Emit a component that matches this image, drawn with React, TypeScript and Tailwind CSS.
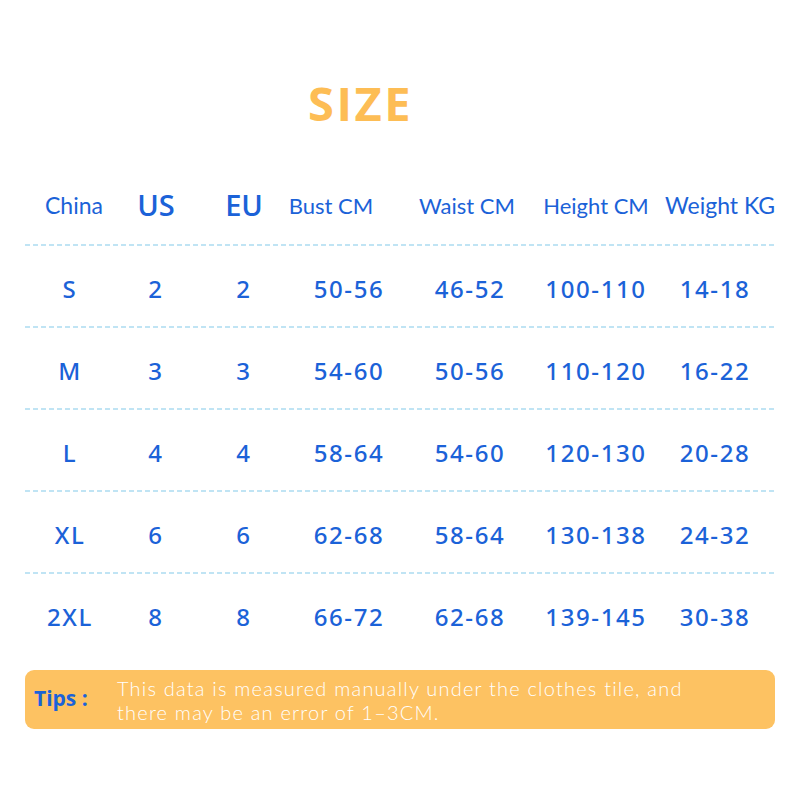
import React from "react";

const widths = [90, 82, 94, 116, 126, 126, 112];
const headerCols = [
  { t: "China", cls: "text-[23px] font-normal translate-x-[4px] font-['Lato',sans-serif]" },
  { t: "US", cls: "text-[29px] font-semibold font-['Open_Sans',sans-serif]" },
  { t: "EU", cls: "text-[29px] font-semibold font-['Open_Sans',sans-serif]" },
  { t: "Bust CM", cls: "text-[22px] font-normal -translate-x-[18px] font-['Lato',sans-serif]" },
  { t: "Waist CM", cls: "text-[22px] font-normal -translate-x-[3px] font-['Lato',sans-serif]" },
  { t: "Height CM", cls: "text-[22px] font-normal font-['Lato',sans-serif]" },
  { t: "Weight KG", cls: "text-[23px] font-normal translate-x-[5px] font-['Lato',sans-serif]" },
];
const rows = [
  ["S", "2", "2", "50-56", "46-52", "100-110", "14-18"],
  ["M", "3", "3", "54-60", "50-56", "110-120", "16-22"],
  ["L", "4", "4", "58-64", "54-60", "120-130", "20-28"],
  ["XL", "6", "6", "62-68", "58-64", "130-138", "24-32"],
  ["2XL", "8", "8", "66-72", "62-68", "139-145", "30-38"],
];

function Dash() {
  return (
    <div className="h-[2px] w-full bg-[repeating-linear-gradient(90deg,#c0e4f4_0_5px,transparent_5px_8px)]" />
  );
}

export default function App() {
  return (
    <div className="w-[800px] h-[800px] bg-white px-[25px] pt-[73px] font-['Lato','Noto_Sans',sans-serif] text-[#1b62d8]">
      <div className="h-[60px] flex items-center pl-[283px]">
        <span className="text-[47px] font-bold text-[#fdbd55] font-['Open_Sans',sans-serif] tracking-[2.5px]">SIZE</span>
      </div>
      <div className="mt-[52px] h-[40px] flex items-center">
        {headerCols.map((h, i) => (
          <div
            key={i}
            className="flex justify-center shrink-0"
            style={{ width: widths[i] }}
          >
            <span className={"whitespace-nowrap " + h.cls}>{h.t}</span>
          </div>
        ))}
      </div>
      <div className="mt-[19px]">
        <Dash />
      </div>
      {rows.map((r, ri) => (
        <div key={ri}>
          <div className="h-[80px] pt-[6px] flex items-center">
            {r.map((c, ci) => (
              <div
                key={ci}
                className="shrink-0 flex justify-center text-[24px] font-medium font-['Noto_Sans',sans-serif] tracking-[1.6px]"
                style={{ width: widths[ci] }}
              >
                <span className="whitespace-nowrap">{c}</span>
              </div>
            ))}
          </div>
          {ri < rows.length - 1 && <Dash />}
        </div>
      ))}
      <div className="mt-[16px] h-[59px] rounded-[9px] bg-[#fdc262] flex items-center pl-[9px]">
        <span className="w-[83px] shrink-0 text-[21px] font-bold text-[#1b62d8] font-['Open_Sans',sans-serif] pb-[2px]">Tips :</span>
        <div className="text-[20px] leading-[24px] tracking-[1.2px] text-white font-['Lato',sans-serif] font-light">
          <div>This data is measured manually under the clothes tile, and</div>
          <div>there may be an error of 1–3CM.</div>
        </div>
      </div>
    </div>
  );
}
